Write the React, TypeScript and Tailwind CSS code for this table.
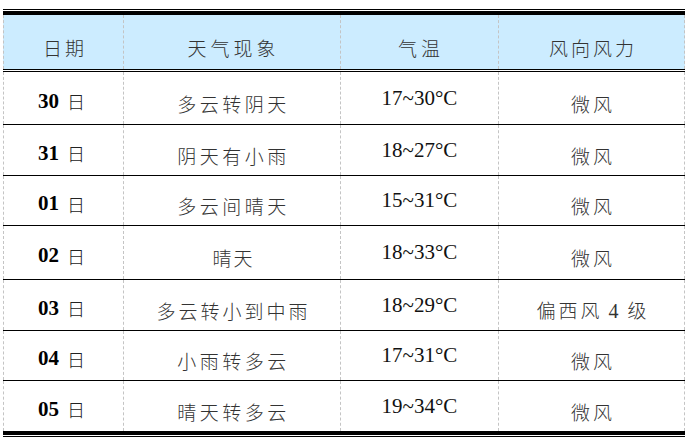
import React from "react";

const CJK = "font-['Noto_Sans_CJK_SC','Noto_Sans_CJK_JP',sans-serif]";
const SERIF = "font-['Liberation_Serif','Times_New_Roman',serif]";

type Row = { d: string; w: string; t: string; f: React.ReactNode; h: string; last?: boolean };

const rows: Row[] = [
  { d: "30", w: "多云转阴天", t: "17~30°C", f: "微风", h: "h-[52px]" },
  { d: "31", w: "阴天有小雨", t: "18~27°C", f: "微风", h: "h-[50px]" },
  { d: "01", w: "多云间晴天", t: "15~31°C", f: "微风", h: "h-[49px]" },
  { d: "02", w: "晴天", t: "18~33°C", f: "微风", h: "h-[53px]" },
  {
    d: "03",
    w: "多云转小到中雨",
    t: "18~29°C",
    f: (
      <>
        偏西风<span className={`${SERIF} text-[20px] mx-[6px]`}>4</span>级
      </>
    ),
    h: "h-[50px]",
  },
  { d: "04", w: "小雨转多云", t: "17~31°C", f: "微风", h: "h-[49px]" },
  { d: "05", w: "晴天转多云", t: "19~34°C", f: "微风", h: "h-[50px]", last: true },
];

const cellBase = "flex items-center justify-center border-l border-dashed border-[#c4c4c4]";

function Cjk({ children, track = "tracking-[3px]" }: { children: React.ReactNode; track?: string }) {
  return (
    <span className={`${CJK} ${track} text-[19px] leading-none text-[#333] font-light mr-[-3px]`}>{children}</span>
  );
}

export default function App() {
  return (
    <div className="w-[689px] h-[447px] bg-white pt-[9px] pl-[3px]">
      <div className="w-[682px]">
        <div className="h-px bg-black" />
        <div className="h-px" />
        <div className="h-[4px] bg-black" />
        <div className="grid grid-cols-[120px_217px_158px_187px] h-[54px] bg-[#ccecff]">
          <div className={`${cellBase} pt-[11px]`}>
            <Cjk>日期</Cjk>
          </div>
          <div className={`${cellBase} pt-[11px]`}>
            <Cjk track="tracking-[4px]">天气现象</Cjk>
          </div>
          <div className={`${cellBase} pt-[11px]`}>
            <Cjk track="tracking-[4px]">气温</Cjk>
          </div>
          <div className={`${cellBase} border-r pt-[11px]`}>
            <Cjk track="tracking-[3px]">风向风力</Cjk>
          </div>
        </div>
        <div className="h-px bg-black" />
        <div className="h-px" />
        <div className="h-px bg-black" />
        {rows.map((r) => (
          <div key={r.d}>
            <div className={`grid grid-cols-[120px_217px_158px_187px] ${r.h}`}>
              <div className={`${cellBase} pt-[6px] pr-[4px]`}>
                <span className={`${SERIF} font-bold text-[21px] leading-none text-black`}>{r.d}</span>
                <span className={`${CJK} text-[18px] leading-none text-[#222] ml-[8px] font-light`}>日</span>
              </div>
              <div className={`${cellBase} pt-[10px]`}>
                <Cjk track={r.w.length === 2 ? "tracking-[2px]" : r.w.length === 7 ? "tracking-[3px]" : "tracking-[3.5px]"}>
                  {r.w}
                </Cjk>
              </div>
              <div className={`${cellBase} pt-[0px]`}>
                <span className={`${SERIF} text-[21px] leading-none text-[#111]`}>{r.t}</span>
              </div>
              <div className={`${cellBase} border-r pt-[10px]`}>
                <Cjk>{r.f}</Cjk>
              </div>
            </div>
            {r.last ? (
              <>
                <div className="h-[4px] bg-black" />
                <div className="h-px" />
                <div className="h-px bg-black" />
              </>
            ) : (
              <div className="h-px bg-black" />
            )}
          </div>
        ))}
      </div>
    </div>
  );
}
